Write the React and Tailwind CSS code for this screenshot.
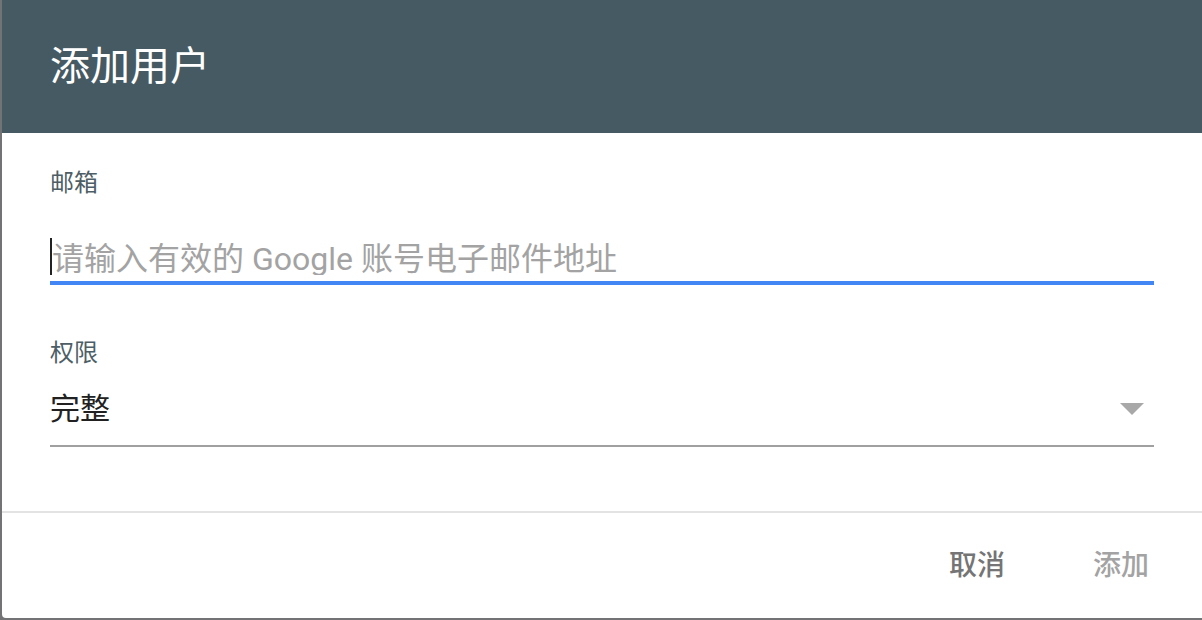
import React from 'react';

const font = { fontFamily: '"Roboto", "Noto Sans CJK SC", sans-serif' };

const App = () => {
  const [email, setEmail] = React.useState('');

  return (
    <div className="w-[1202px] h-[620px] bg-[#737376] pl-[2px] pb-[2px] flex" style={font}>
      <div className="flex-1 bg-white rounded-bl-[4px] flex flex-col overflow-hidden">
        {/* header */}
        <div className="h-[133px] bg-[#465a64] px-[48px] flex items-center">
          <h1 className="text-[40px] leading-[40px] text-white font-normal">添加用户</h1>
        </div>

        {/* body */}
        <div className="px-[48px] pt-[38px] h-[378px]">
          <div className="text-[24px] leading-[24px] text-[#4d5e66]">邮箱</div>
          <div className="mt-[43px] pb-[6px] border-b-4 border-[#4285f4]">
            <div className="h-[37px] flex items-center">
              <span className="w-[2px] h-full bg-[#222]" />
              <input
                value={email}
                onChange={e => setEmail(e.target.value)}
                placeholder="请输入有效的 Google 账号电子邮件地址"
                className="flex-1 h-[32px] mt-[5px] text-[32px] leading-[32px] text-[#212121] outline-none placeholder:text-[#a3a3a3] bg-transparent"
              />
            </div>
          </div>

          <div className="mt-[56px] text-[24px] leading-[24px] text-[#4d5e66]">权限</div>
          <div className="mt-[28px] flex items-center justify-between pb-[20px] border-b-2 border-[#a0a0a0]">
            <span className="text-[30px] leading-[32px] text-[#212121]">完整</span>
            <svg width="24" height="12" viewBox="0 0 24 12" className="mr-[10px]">
              <polygon points="0,0 24,0 12,12" fill="#a8a8a8" />
            </svg>
          </div>
        </div>

        {/* footer */}
        <div className="flex-1 border-t-2 border-[#e3e3e3] flex items-center justify-end gap-[88px] pr-[53px]">
          <button className="text-[28px] leading-[28px] font-medium text-[#757575]">取消</button>
          <button disabled className="text-[28px] leading-[28px] font-medium text-[#a3a3a3]">添加</button>
        </div>
      </div>
    </div>
  );
};

export default App;
